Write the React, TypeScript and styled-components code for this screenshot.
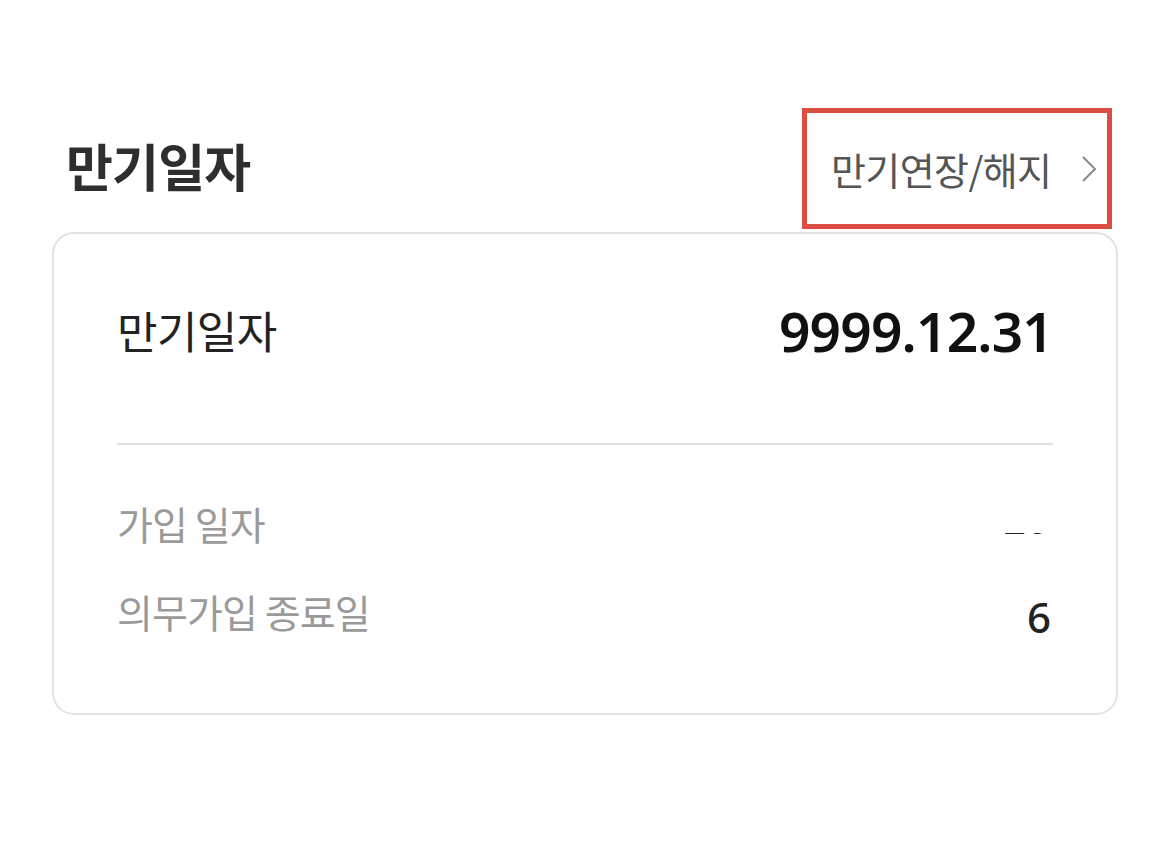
import React from 'react';
import styled, { createGlobalStyle } from 'styled-components';

const GlobalStyle = createGlobalStyle`
  html, body {
    margin: 0;
    padding: 0;
    background: #ffffff;
  }
  body {
    font-family: "Noto Sans CJK KR", "Noto Sans", sans-serif;
  }
`;

const Page = styled.div`
  width: 1170px;
  height: 863px;
  padding: 108px 52px 0;
  box-sizing: border-box;
  background: #ffffff;
`;

const Header = styled.div`
  display: flex;
  align-items: center;
  justify-content: space-between;
  padding: 0 6px 0 14px;
  margin-bottom: 3px;
`;

const Title = styled.h2`
  margin: 0 0 8px;
  font-size: 51px;
  font-weight: 700;
  color: #2e2e2e;
  letter-spacing: -0.8px;
`;

const LinkBox = styled.button`
  display: flex;
  align-items: center;
  gap: 30px;
  width: 310px;
  height: 121px;
  box-sizing: border-box;
  padding: 0 0 0 24px;
  border: 5px solid #dc4d42;
  background: #ffffff;
  font-family: inherit;
  font-size: 38px;
  color: #555555;
  cursor: pointer;
  letter-spacing: -0.6px;
`;

const Chevron = styled.svg`
  width: 16px;
  height: 28px;
  flex-shrink: 0;
`;

const Card = styled.div`
  border: 2px solid #e2e2e2;
  border-radius: 22px;
  padding: 0 63px;
  height: 483px;
  box-sizing: border-box;
`;

const MainRow = styled.div`
  display: flex;
  align-items: center;
  justify-content: space-between;
  padding: 56px 0 73px;
  height: 80px;
  box-sizing: content-box;
`;

const MainLabel = styled.span`
  font-size: 44px;
  color: #222222;
  letter-spacing: -0.6px;
`;

const MainValue = styled.span`
  font-family: "Noto Sans", "Noto Sans CJK KR", sans-serif;
  font-size: 55px;
  font-weight: 600;
  color: #111111;
  letter-spacing: -0.8px;
`;

const Divider = styled.hr`
  margin: 0;
  border: none;
  height: 2px;
  background: #e0e0e0;
`;

const Details = styled.div`
  display: flex;
  flex-direction: column;
  gap: 32px;
  padding-top: 50px;
`;

const DetailRow = styled.div`
  display: flex;
  align-items: center;
  justify-content: space-between;
  height: 56px;
`;

const DetailLabel = styled.span`
  font-size: 39px;
  color: #9a9a9a;
  letter-spacing: -0.9px;
`;

const Redacted = styled.span<{ $show: number; $offset: number }>`
  display: inline-block;
  height: ${p => p.$show}px;
  overflow: hidden;
  line-height: 1;
  font-family: "Noto Sans", sans-serif;
  font-size: 40px;
  color: #222222;
  margin-top: ${p => p.$offset}px;
  margin-right: 4px;
`;

const RedactedInner = styled.span<{ $shift: number }>`
  display: block;
  margin-top: ${p => -p.$shift}px;
`;

const SingleDigit = styled.span`
  font-family: "Noto Sans", sans-serif;
  font-size: 42px;
  font-weight: 500;
  color: #222222;
  margin-right: 2px;
  margin-top: 10px;
`;

export default function App() {
  return (
    <>
      <GlobalStyle />
      <Page>
        <Header>
          <Title>만기일자</Title>
          <LinkBox>
            <span>만기연장/해지</span>
            <Chevron viewBox="0 0 16 28">
              <path d="M2 2 L14 14 L2 26" fill="none" stroke="#8a8a8a" strokeWidth="2" />
            </Chevron>
          </LinkBox>
        </Header>
        <Card>
          <MainRow>
            <MainLabel>만기일자</MainLabel>
            <MainValue>9999.12.31</MainValue>
          </MainRow>
          <Divider />
          <Details>
            <DetailRow>
              <DetailLabel>가입 일자</DetailLabel>
              <Redacted $show={6} $offset={26} $shift={34}>
                <RedactedInner $shift={34}>20</RedactedInner>
              </Redacted>
            </DetailRow>
            <DetailRow>
              <DetailLabel>의무가입 종료일</DetailLabel>
              <SingleDigit>6</SingleDigit>
            </DetailRow>
          </Details>
        </Card>
      </Page>
    </>
  );
}
